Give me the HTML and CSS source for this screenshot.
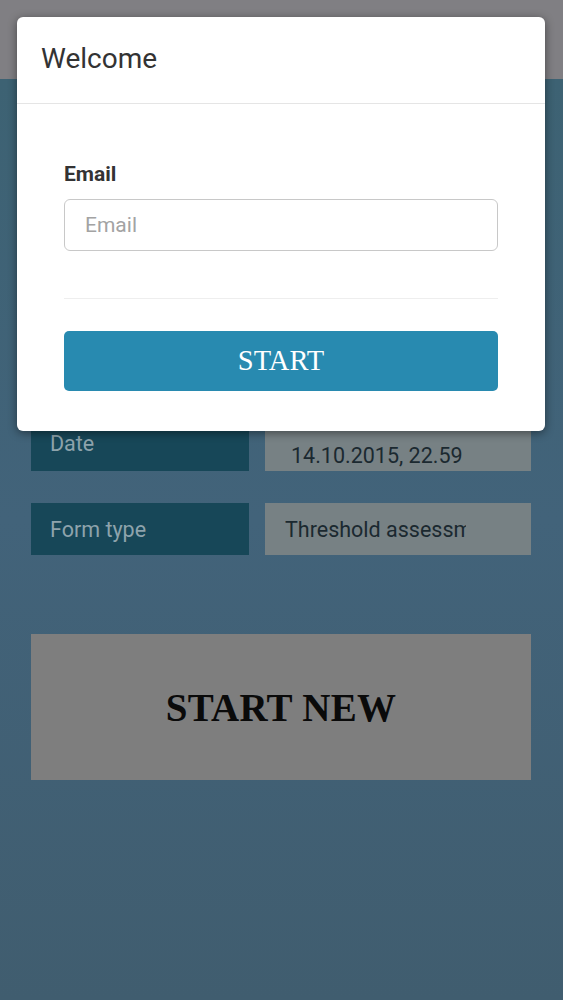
FILE: index.html
```html
<!DOCTYPE html>
<html lang="en">
<head>
<meta charset="utf-8">
<title>Welcome</title>
<link rel="stylesheet" href="styles.css">
</head>
<body>
<div class="page">
  <div class="topbar"></div>
  <main class="content">
    <div class="row row-date">
      <div class="cell-label">Date</div>
      <div class="cell-value">14.10.2015, 22.59</div>
    </div>
    <div class="row">
      <div class="cell-label">Form type</div>
      <div class="cell-value cell-clip"><span>Threshold assessment</span></div>
    </div>
    <button class="start-new" type="button">START NEW</button>
  </main>
  <div class="modal-layer">
    <div class="modal">
      <div class="modal-header">Welcome</div>
      <div class="modal-body">
        <label class="field-label" for="email">Email</label>
        <input class="field-input" id="email" type="text" placeholder="Email">
        <hr class="divider">
        <button class="btn-start" type="button">START</button>
      </div>
    </div>
  </div>
</div>
</body>
</html>
```

FILE: styles.css
```css
* { box-sizing: border-box; }
html, body { margin: 0; padding: 0; }
body {
  font-family: Roboto, "Noto Sans", sans-serif;
  background: #415f70;
}
.page {
  position: relative;
  width: 563px;
  min-height: 1000px;
  background: linear-gradient(180deg, #3d6273 80px, #42637a 520px, #405d6f 1000px);
}
.topbar {
  height: 79px;
  background: #807f83;
}
.content {
  padding: 340px 32px 0 31px;
  display: flex;
  flex-direction: column;
}
.row {
  display: grid;
  grid-template-columns: 218px 266px;
  column-gap: 16px;
  height: 52px;
  margin-bottom: 32px;
}
.cell-label {
  background: #174758;
  color: #8ea3ac;
  font-size: 21.5px;
  padding-left: 19px;
  display: flex;
  align-items: center;
}
.cell-value {
  background: #778184;
  color: #1b2930;
  font-size: 21.5px;
  padding-left: 20px;
  display: flex;
  align-items: center;
}
.row-date .cell-label { align-items: flex-start; padding-top: 12px; }
.row-date .cell-value { align-items: flex-start; padding-top: 24px; padding-left: 26px; }
.cell-clip { overflow: hidden; white-space: nowrap; }
.cell-clip span {
  display: block;
  width: 181px;
  overflow: hidden;
}
.start-new {
  margin-top: 47px;
  height: 146px;
  width: 500px;
  border: 0;
  background: #7e7e7e;
  color: #0a0a0a;
  font-family: "Liberation Serif", "Times New Roman", serif;
  font-weight: bold;
  font-size: 39px;
  letter-spacing: 0.3px;
  padding: 0;
}
.modal-layer {
  position: absolute;
  top: 17px;
  left: 17px;
  width: 528px;
}
.modal {
  background: #fff;
  border-radius: 6px;
  box-shadow: 0 2px 10px rgba(0, 0, 0, 0.45);
  overflow: hidden;
}
.modal-header {
  height: 87px;
  padding: 25px 23px 0 24px;
  font-size: 28px;
  color: #333;
  line-height: 34px;
  border-bottom: 1px solid #e5e5e5;
}
.modal-body {
  padding: 58px 47px 40px;
  display: flex;
  flex-direction: column;
}
.field-label {
  font-weight: bold;
  font-size: 21px;
  line-height: 24px;
  color: #333;
  margin-bottom: 13px;
}
.field-input {
  height: 52px;
  width: 434px;
  border: 1px solid #c8c8c8;
  border-radius: 6px;
  padding: 0 20px;
  font-family: Roboto, "Noto Sans", sans-serif;
  font-size: 21px;
  color: #555;
  outline: none;
}
.field-input::placeholder { color: #a3a3a3; }
.divider {
  margin: 47px 0 0;
  border: 0;
  border-top: 1px solid #eee;
  height: 0;
}
.btn-start {
  margin-top: 32px;
  height: 60px;
  width: 434px;
  border: 0;
  border-radius: 5px;
  background: #288ab0;
  color: #fff;
  font-family: "Liberation Serif", "Times New Roman", serif;
  font-size: 28.5px;
  padding: 0;
}
```
